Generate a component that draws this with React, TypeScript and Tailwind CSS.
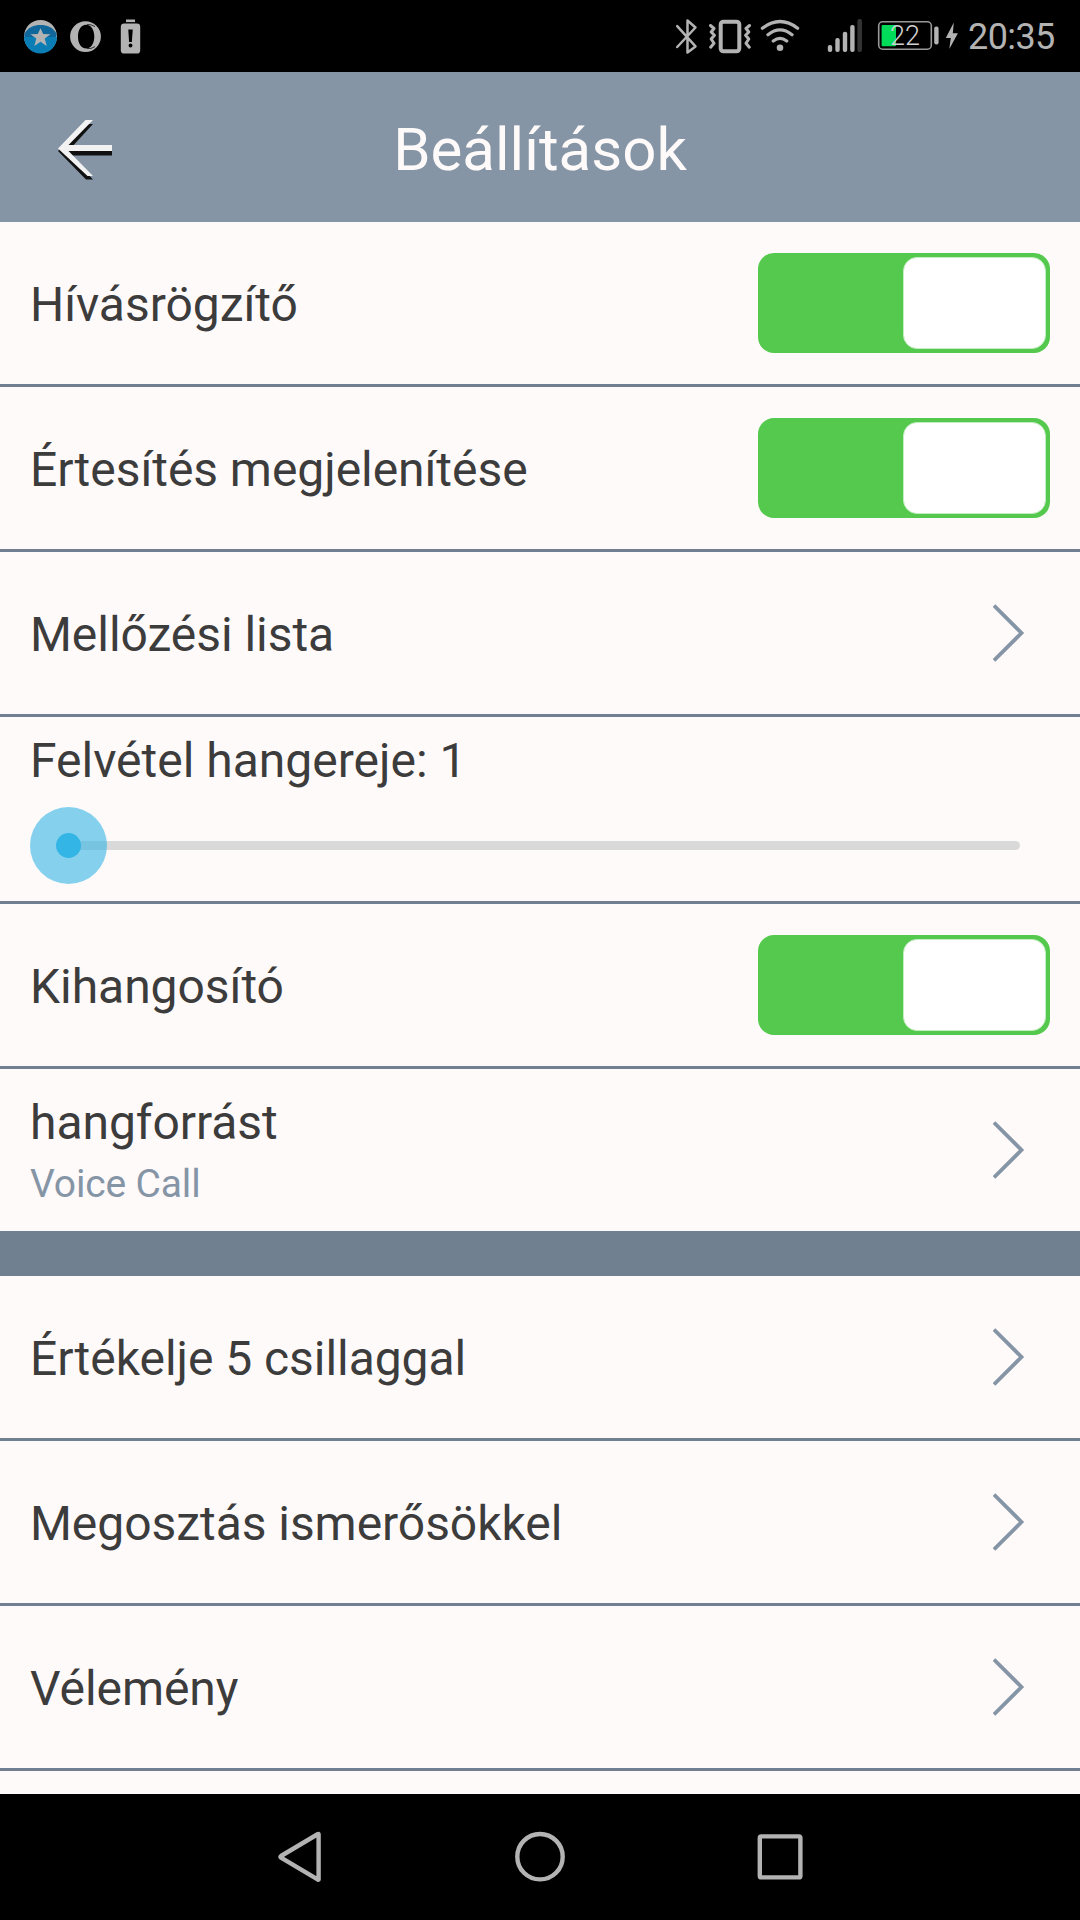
import React from 'react';

const StatusBar: React.FC = () => (
    <header className="flex h-[72px] shrink-0 items-center bg-black pl-6 text-[#b3b3b3]">
        <svg width="34" height="72" viewBox="24 0 34 72">
            <circle cx="40.5" cy="36.5" r="16.5" fill="#b3b3b3" />
            <path d="M24.4 34C28 27 34 25 40.5 25S53 27 56.7 34A16.5 16.5 0 0 1 24.4 37Z" fill="#0f679b" />
            <path d="M24 37H57A16.5 16.5 0 0 1 24 37Z" fill="#0a7db5" />
            <path d="M40.5 28.2l2.7 5.9 7.3.2-5.8 4.3 2 7.4-6.2-4.2-6.2 4.2 2-7.4-5.8-4.3 7.3-.2z" fill="#b3b3b3" />
        </svg>
        <svg className="ml-3" width="31" height="72" viewBox="70 0 31 72" fill="currentColor">
            <path fillRule="evenodd" d="M85.5 21.2a15.4 15.4 0 1 0 0 30.8 15.4 15.4 0 1 0 0-30.8zM86.3 24.7c4.9 0 8 5.2 8 11.9s-3.1 11.9-8 11.9c-5.4 0-8.3-5.2-8.3-11.9s2.9-11.9 8.3-11.9z" />
            <path d="M87 24.6q4-.6 8 2M87 48.6q4 .6 8-2" fill="none" stroke="#333" strokeWidth="1" />
        </svg>
        <svg className="ml-[19px]" width="21" height="72" viewBox="120 0 21 72">
            <path d="M126 20.8h9" stroke="#b3b3b3" strokeWidth="2.6" />
            <rect x="120.8" y="23.4" width="19.4" height="30.2" rx="3.4" fill="#b3b3b3" />
            <path d="M128.3 29.5h4.4l-.8 12.5h-2.8z" fill="#000" />
            <circle cx="130.5" cy="45.5" r="1.9" fill="#000" />
        </svg>

        <svg className="ml-[534px]" width="23" height="72" viewBox="675 0 23 72" fill="none" stroke="currentColor" strokeWidth="2.5" strokeLinejoin="round" strokeLinecap="round">
            <path d="M677.2 26.2l18.3 20.2-8 6.1V20.5l8 7-18.3 19.5" />
        </svg>
        <svg className="ml-[11px]" width="42" height="72" viewBox="709 0 42 72" fill="none" stroke="currentColor" strokeWidth="3" strokeLinejoin="round" strokeLinecap="round">
            <rect x="720.7" y="21.7" width="18.6" height="29.6" rx="2.8" strokeWidth="4" />
            <path d="M710.5 25.5l3.5 3-2.8 3.5 3.2 3.3-3.2 3.7 2.8 4.3-3.3 3.9M749.5 25.5l-3.5 3 2.8 3.5-3.2 3.3 3.2 3.7-2.8 4.3 3.3 3.9" />
        </svg>
        <svg className="ml-[9px]" width="40" height="72" viewBox="760 0 40 72" fill="none" stroke="currentColor" strokeWidth="3.3" strokeLinecap="round">
            <path d="M762.4 28.2Q780 14.8 797.6 28.2M768 34.7Q780 25 792 34.7M773.3 41Q780 35.8 786.7 41" />
            <circle cx="780" cy="47.8" r="3.3" fill="currentColor" stroke="none" />
        </svg>
        <svg className="ml-[27px]" width="36" height="72" viewBox="827 0 36 72" fill="currentColor">
            <rect x="827.8" y="45" width="4.4" height="7" rx="2" />
            <rect x="835.3" y="38" width="4.4" height="14" rx="2" />
            <rect x="842.8" y="31.8" width="4.4" height="20.2" rx="2" />
            <rect x="850.2" y="25" width="4.4" height="27" rx="2" />
            <rect x="857.4" y="19" width="4.6" height="33" rx="2" fill="#333" />
        </svg>
        <div className="relative ml-[14px] h-[72px] w-[63px]">
            <svg width="63" height="72" viewBox="877 0 63 72">
                <rect x="878.7" y="21.8" width="52.6" height="27.4" rx="4" fill="none" stroke="#999" strokeWidth="1.6" />
                <rect x="881.6" y="25" width="14.4" height="21.2" rx="1" fill="#00dc5a" />
                <rect x="934.2" y="26.4" width="4.4" height="18.2" rx="2" fill="#b3b3b3" />
            </svg>
            <span className="absolute left-[13px] top-[20px] font-['Roboto'] text-[27px] font-light leading-[32px] text-[#d0d0d0]">22</span>
        </div>
        <svg className="ml-[5px]" width="14" height="72" viewBox="945 0 14 72" fill="currentColor">
            <path d="M953.8 22.5L945.8 38h5l-1.5 11 8.6-15.8h-5.1z" />
        </svg>
        <span className="ml-[9px] pt-[2px] font-['Roboto'] text-[36px] tracking-[-0.6px]">20:35</span>
    </header>
);

const Toggle: React.FC = () => (
    <div className="flex h-[100px] w-[292px] justify-end rounded-[16px] bg-[#55c94e] py-1 pr-1">
        <div className="w-[143px] rounded-[14px] border border-[#c5edc2] bg-white"></div>
    </div>
);

const Chevron: React.FC = () => (
    <svg className="mr-[25px]" width="32" height="60" viewBox="0 0 32 60" fill="none" stroke="#8595a6" strokeWidth="3.8">
        <path d="M1 2.500L28.500 30 1 57.500" />
    </svg>
);

const Row: React.FC<{ label: string, sub?: string, toggle?: boolean, last?: boolean }> = ({ label, sub, toggle, last }) => (
    <div className={`flex shrink-0 items-center justify-between px-[30px] ${last ? 'h-[162px]' : 'h-[165px] border-b-[3px] border-[#708090]'}`}>
        <div className={sub ? 'flex flex-col' : 'flex flex-col pt-[3px]'}>
            <span className="text-[48px] leading-[64px] tracking-[-0.05px]">{label}</span>
            {sub && <span className="text-[39px] leading-[52px] tracking-[-0.15px] text-[#8595a6] mt-[3px]">{sub}</span>}
        </div>
        {toggle ? <Toggle /> : <Chevron />}
    </div>
);

const VolumeRow: React.FC = () => (
    <div className="flex h-[187px] shrink-0 flex-col border-b-[3px] border-[#708090] pl-[30px] pt-3">
        <span className="text-[48px] leading-[64px]">Felvétel hangereje: 1</span>
        <svg className="mt-[13px]" width="992" height="79" viewBox="0 0 992 79">
            <path d="M38 35h947.5a4.5 4.5 0 0 1 0 9H38z" fill="#d9d9d9" />
            <circle cx="38.5" cy="39.5" r="38.5" fill="#33b5e5" fillOpacity="0.6" />
            <circle cx="38.5" cy="39.5" r="12.5" fill="#33b5e5" />
        </svg>
    </div>
);

const NavBar: React.FC = () => (
    <nav className="flex h-[126px] shrink-0 items-center justify-center bg-black">
        <svg width="526" height="126" viewBox="277 1794 526 126" fill="none" stroke="#b3b3b3" strokeWidth="4.4" strokeLinejoin="round">
            <path d="M318.6 1834.2v45.2q0 .6-.6.2l-37-22q-1.2-.8 0-1.6l37-22q.6-.4.6.2z" />
            <circle cx="540" cy="1856.7" r="22.7" />
            <rect x="759.8" y="1836.4" width="40.6" height="41" rx="1.5" />
        </svg>
    </nav>
);

const App: React.FC = () => (
    <div className="flex h-[1920px] w-[1080px] flex-col overflow-hidden bg-[#fffafa] font-['Roboto',sans-serif] text-[#3c3c3c]">
        <StatusBar />
        <div className="grid h-[150px] shrink-0 grid-cols-[140px_1fr_140px] items-center bg-[#8595a6]">
            <svg className="ml-14" width="60" height="70" viewBox="56 112 60 70">
                <path d="M86 124h7L70 149h42v6.500H70L93 179.500h-7L58 151z" fill="#111" />
                <path d="M85.500 120h7.500L68.500 145H112v6H68.500L93 176h-5.500L58 148.500z" fill="#f2f2f2" />
            </svg>
            <h1 className="pt-[5px] text-center text-[60px] leading-[80px] text-[#fffafa]">Beállítások</h1>
        </div>
        <main className="flex h-[1572px] shrink-0 flex-col overflow-hidden">
            <Row label="Hívásrögzítő" toggle />
            <Row label="Értesítés megjelenítése" toggle />
            <Row label="Mellőzési lista" />
            <VolumeRow />
            <Row label="Kihangosító" toggle />
            <Row label="hangforrást" sub="Voice Call" last />
            <div className="h-[45px] shrink-0 bg-[#708090]"></div>
            <Row label="Értékelje 5 csillaggal" />
            <Row label="Megosztás ismerősökkel" />
            <Row label="Vélemény" />
        </main>
        <NavBar />
    </div>
);

export default App;
